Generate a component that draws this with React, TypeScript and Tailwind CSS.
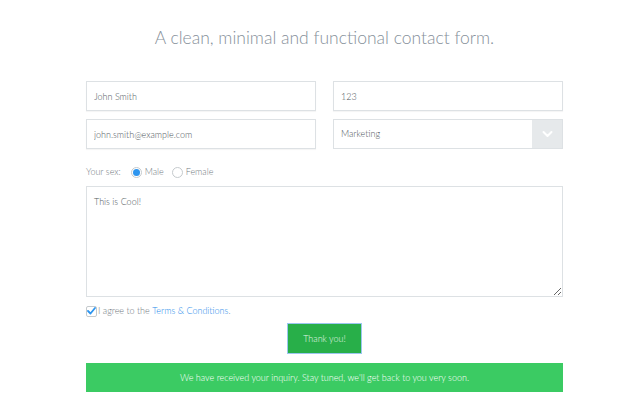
import { useState } from "react";

const inputCls =
  "h-[30px] w-full border border-[#dde1e4] bg-white px-[7px] text-[9px] font-light text-[#4f575d] outline-none shadow-[0_1px_1px_rgba(0,0,0,0.04)]";

export default function App() {
  const [sex, setSex] = useState("male");

  return (
    <div
      className="min-h-[400px] w-full bg-white pl-[9px]"
      style={{ fontFamily: "Lato, 'Open Sans', sans-serif" }}
    >
      <div className="mx-auto w-[477px]">
        <h1 className="pt-[25px] text-center text-[17.5px] font-light leading-[26px] text-[#86909a]">
          A clean, minimal and functional contact form.
        </h1>

        <form className="mt-[30px]">
          <div className="grid grid-cols-2 gap-x-[17px] gap-y-[8px]">
            <input className={inputCls} defaultValue="John Smith" />
            <input className={inputCls} defaultValue="123" />
            <input className={inputCls} defaultValue="john.smith@example.com" />
            <div className="flex h-[30px] border border-[#dde1e4] bg-white">
              <span className="flex flex-1 items-center px-[7px] text-[9px] font-light text-[#4f575d]">
                Marketing
              </span>
              <span className="flex w-[30px] items-center justify-center bg-[#e6e9eb]">
                <svg width="11" height="8" viewBox="0 0 11 8" fill="none">
                  <path
                    d="M1.5 2 L5.5 6 L9.5 2"
                    stroke="#fff"
                    strokeWidth="2"
                    strokeLinecap="round"
                    strokeLinejoin="round"
                  />
                </svg>
              </span>
            </div>
          </div>

          <div className="mt-[15px] flex h-[16px] items-center text-[9px] font-light text-[#737b82]">
            <span className="mr-[10px]">Your sex:</span>
            <label className="mr-[8px] flex items-center gap-[3px]">
              <span
                onClick={() => setSex("male")}
                className="flex h-[11px] w-[11px] items-center justify-center rounded-full border border-[#c5cacd] bg-white"
              >
                {sex === "male" && (
                  <span className="h-[7px] w-[7px] rounded-full bg-[#2d95ef]" />
                )}
              </span>
              Male
            </label>
            <label className="flex items-center gap-[3px]">
              <span
                onClick={() => setSex("female")}
                className="flex h-[11px] w-[11px] items-center justify-center rounded-full border border-[#c5cacd] bg-white"
              >
                {sex === "female" && (
                  <span className="h-[7px] w-[7px] rounded-full bg-[#2d95ef]" />
                )}
              </span>
              Female
            </label>
          </div>

          <textarea
            className="mt-[6px] block h-[111px] w-full resize-y border border-[#dde1e4] px-[7px] py-[8px] text-[9px] font-light text-[#4f575d] outline-none"
            defaultValue="This is Cool!"
          />

          <div className="mt-[7px] flex h-[14px] items-center text-[9px] font-light text-[#737b82]">
            <span className="mr-[1px] flex h-[11px] w-[11px] items-center justify-center rounded-[2px] border border-[#c5cacd] bg-white">
              <svg width="9" height="8" viewBox="0 0 9 8" fill="none">
                <path
                  d="M1 4 L3.5 6.5 L8 1"
                  stroke="#2d95ef"
                  strokeWidth="1.8"
                  strokeLinecap="round"
                  strokeLinejoin="round"
                />
              </svg>
            </span>
            I agree to the&nbsp;
            <a className="text-[#1f8ceb]">Terms &amp; Conditions</a>.
          </div>

          <div className="mt-[6px] flex justify-center">
            <button
              type="button"
              className="h-[29px] w-[73px] bg-[#28af49] text-[9px] font-light text-[#e3f6e7] ring-1 ring-[#9cc6f0]"
            >
              Thank you!
            </button>
          </div>

          <div className="mt-[10px] flex h-[29px] items-center justify-center bg-[#3bcb63] text-[9px] font-light text-white">
            We have received your inquiry. Stay tuned, we'll get back to you very soon.
          </div>
        </form>
      </div>
    </div>
  );
}
